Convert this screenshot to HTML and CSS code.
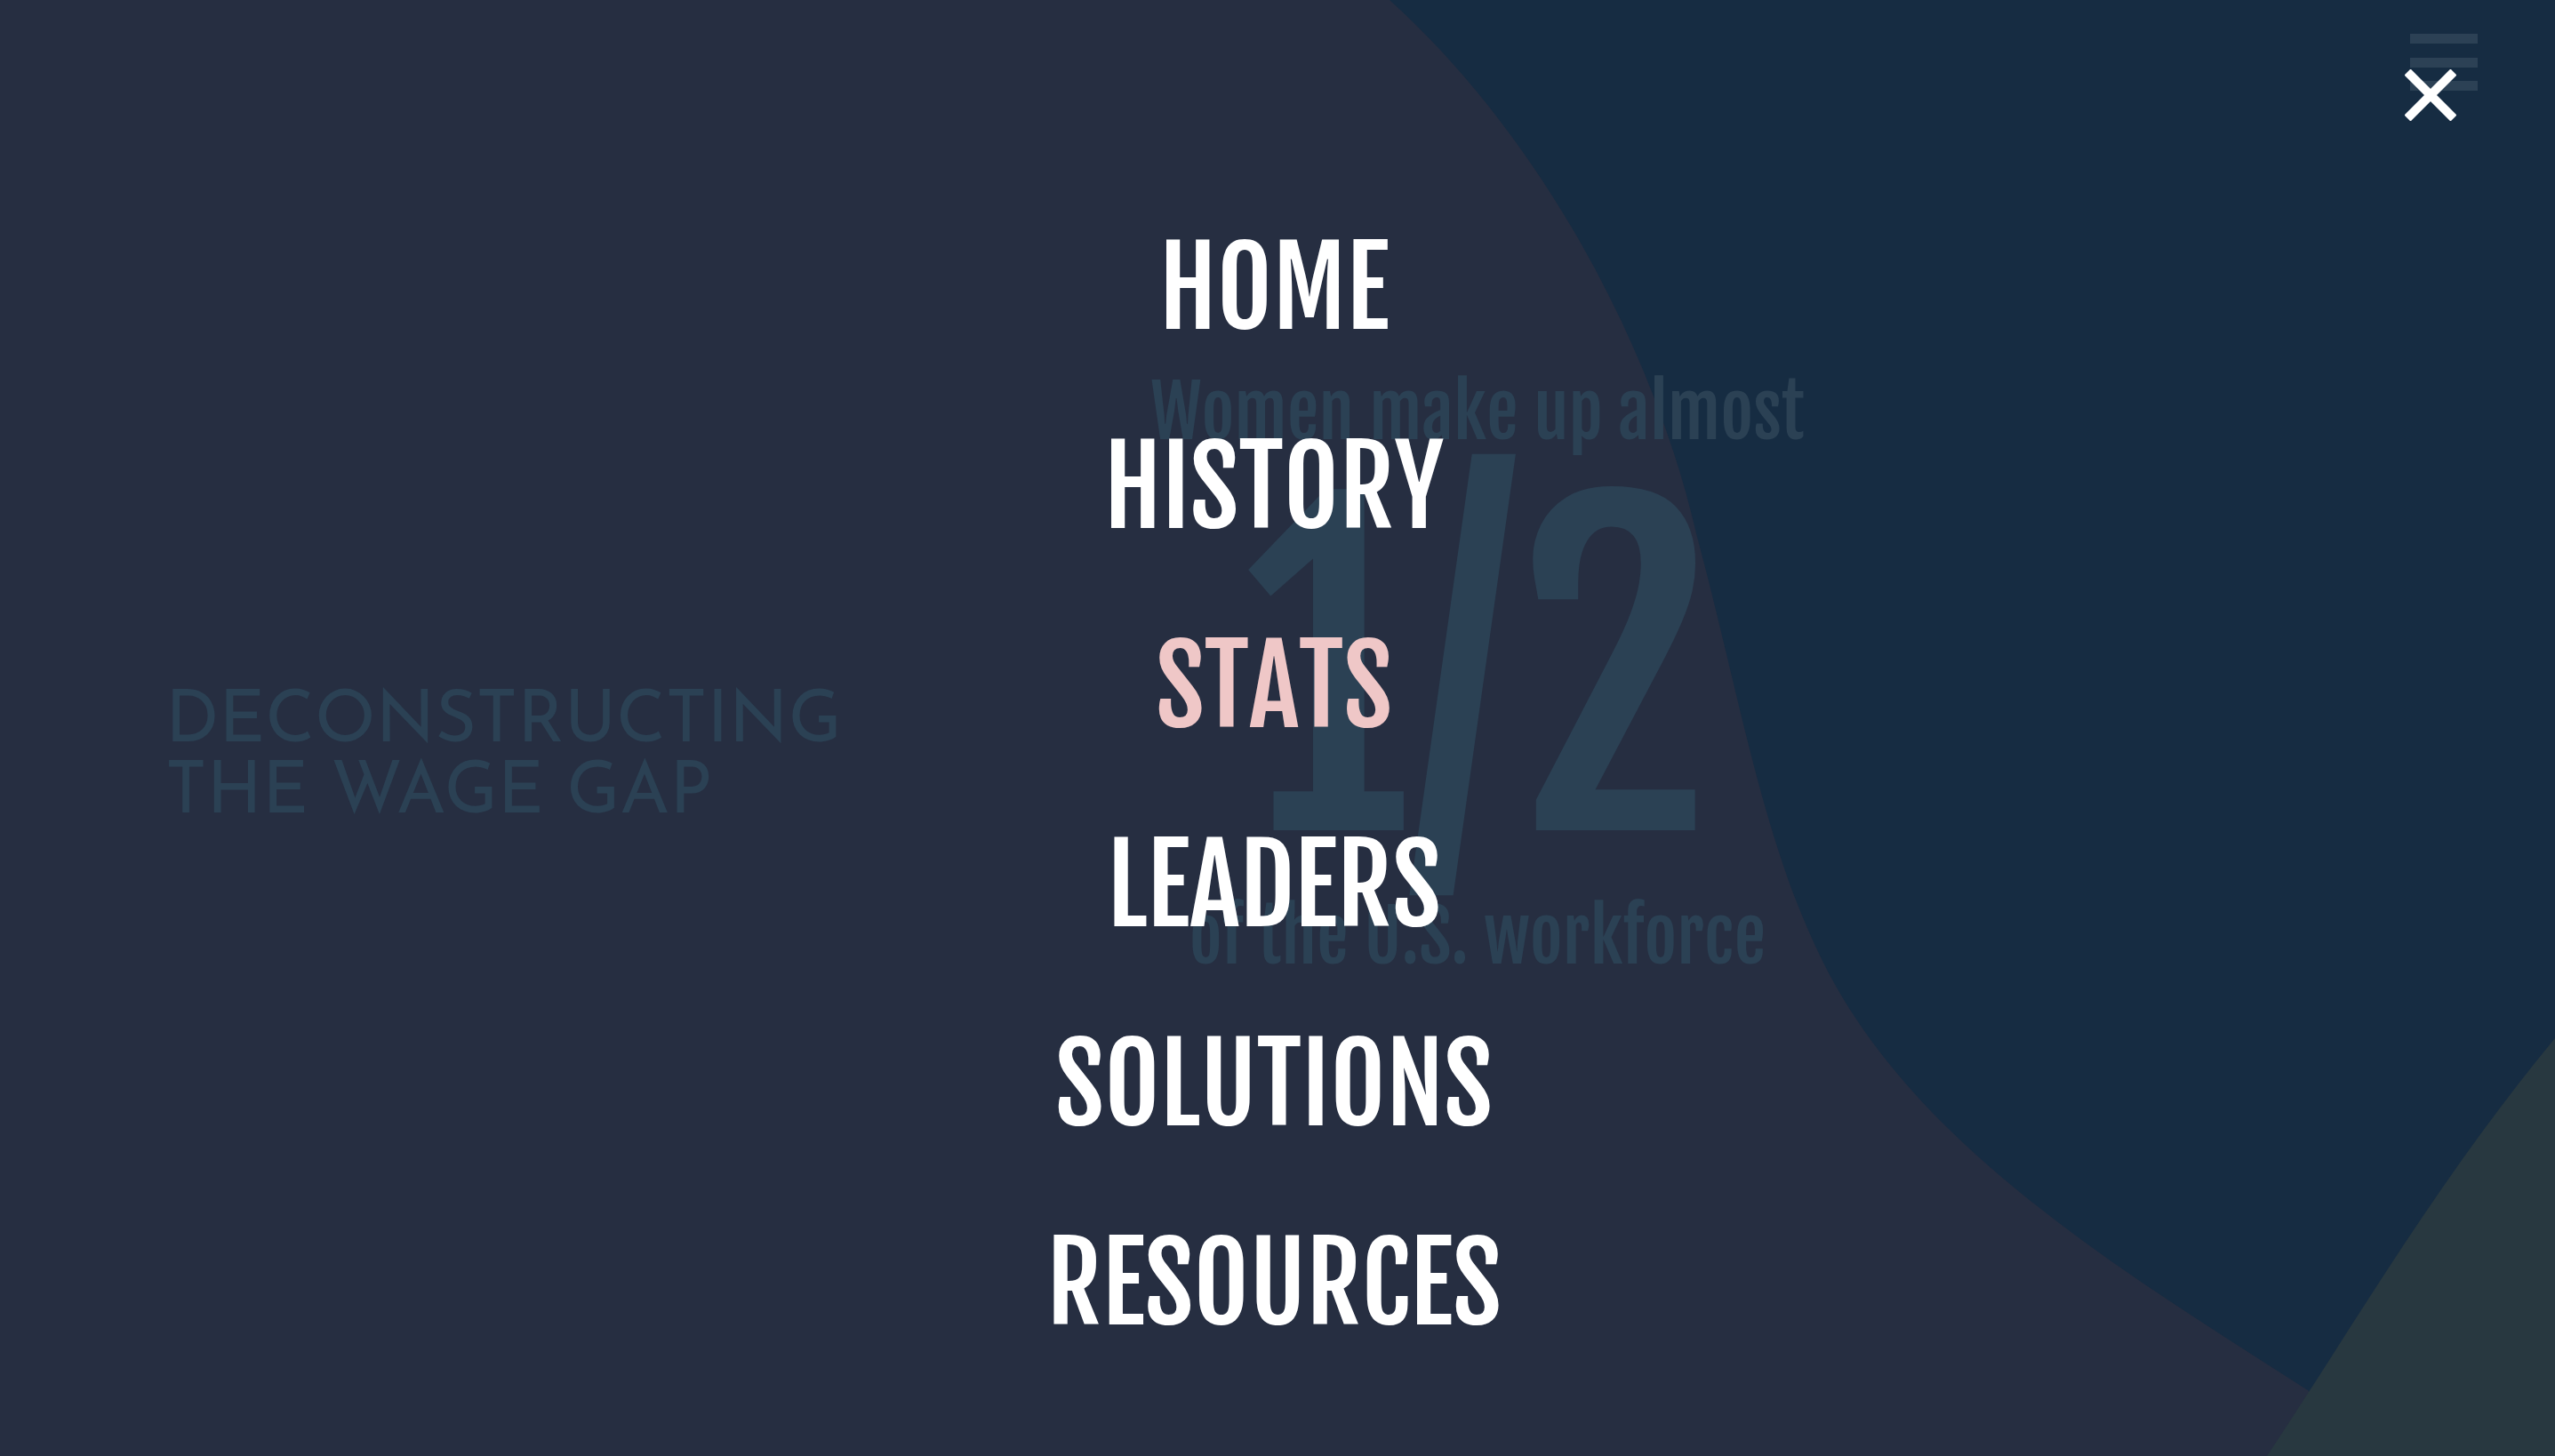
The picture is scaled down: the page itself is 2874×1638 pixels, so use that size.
FILE: index.html
```html
<!DOCTYPE html>
<html lang="en">
<head>
<meta charset="utf-8">
<meta name="viewport" content="width=device-width, initial-scale=1">
<title>Deconstructing the Wage Gap</title>
<link rel="stylesheet" href="styles.css">
</head>
<body>
<div class="page">
  <svg class="backdrop" viewBox="0 0 2874 1638" preserveAspectRatio="none" aria-hidden="true">
    <path class="blob-blue" d="M1563 0C1740 160 1862 400 1908 600C1956 778 1982 945 2051 1083C2155 1291 2390 1432 2596 1564L2660 1638H2874V0Z"/>
    <path class="blob-green" d="M2874 1168C2740 1330 2650 1488 2550 1638H2874Z"/>
  </svg>
  <main class="slide">
    <h1 class="title">DECONSTRUCTING<br>THE WAGE GAP</h1>
    <section class="stat">
      <p class="stat-text">Women make up almost</p>
      <p class="stat-number">1/2</p>
      <p class="stat-text">of the U.S. workforce</p>
    </section>
  </main>
  <button class="menu-open" type="button" aria-label="Open menu">
    <span class="bar"></span><span class="bar"></span><span class="bar"></span>
  </button>
</div>
<div class="overlay">
  <button class="menu-close" type="button" aria-label="Close menu">
    <svg class="cross" viewBox="0 0 58 58" aria-hidden="true"><path d="M3 3L55 55M55 3L3 55"/></svg>
  </button>
  <nav class="menu">
    <a class="menu-link" href="#home">HOME</a>
    <a class="menu-link" href="#history">HISTORY</a>
    <a class="menu-link active" href="#stats">STATS</a>
    <a class="menu-link" href="#leaders">LEADERS</a>
    <a class="menu-link" href="#solutions">SOLUTIONS</a>
    <a class="menu-link" href="#resources">RESOURCES</a>
  </nav>
</div>
</body>
</html>
```
FILE: styles.css
```css
* {
  box-sizing: border-box;
}

body {
  margin: 0;
  background: #262e41;
  color: #2b4154;
  font-family: "Fjalla One", "Roboto Condensed", sans-serif;
  font-kerning: none;
}

.page {
  position: relative;
  min-height: 100vh;
  overflow: hidden;
}

.backdrop {
  position: absolute;
  inset: 0;
  width: 100%;
  height: 100%;
}

.blob-blue {
  fill: #162c42;
}

.blob-green {
  fill: #283840;
}

.slide {
  position: relative;
  display: grid;
  grid-template-columns: 42% 32%;
  align-items: center;
  min-height: 100vh;
}

.title {
  margin: 0;
  padding: 70px 0 0 186px;
  font-family: "Josefin Sans", sans-serif;
  font-size: 80px;
  font-weight: 400;
  font-kerning: normal;
  line-height: 80px;
}

.stat {
  padding: 0 10px 120px 0;
  text-align: center;
}

.stat-text,
.stat-number {
  margin: 0;
}

.stat-text {
  font-size: 80px;
  line-height: 100px;
}

.stat-number {
  font-size: 460px;
  line-height: 490px;
}

.menu-open,
.menu-close {
  position: absolute;
  padding: 0;
  border: 0;
  background: none;
  cursor: pointer;
}

.menu-open {
  top: 38px;
  right: 87px;
  display: flex;
  flex-direction: column;
  justify-content: space-between;
  width: 76px;
  height: 64px;
}

.bar {
  width: 100%;
  height: 11px;
  background: #2c4155;
}

.overlay {
  position: absolute;
  inset: 0;
  display: flex;
  align-items: center;
  justify-content: center;
}

.menu-close {
  top: 78px;
  right: 111px;
  width: 58px;
  height: 58px;
}

.cross {
  display: block;
  fill: none;
  stroke: #fff;
  stroke-width: 10;
}

.menu {
  display: flex;
  flex-direction: column;
  align-items: center;
  gap: 74px;
  padding: 132px 8px 0 0;
}

.menu-link {
  color: #fff;
  font-size: 120px;
  line-height: 150px;
  text-decoration: none;
}

.menu-link.active {
  color: #efc7c7;
}
```
